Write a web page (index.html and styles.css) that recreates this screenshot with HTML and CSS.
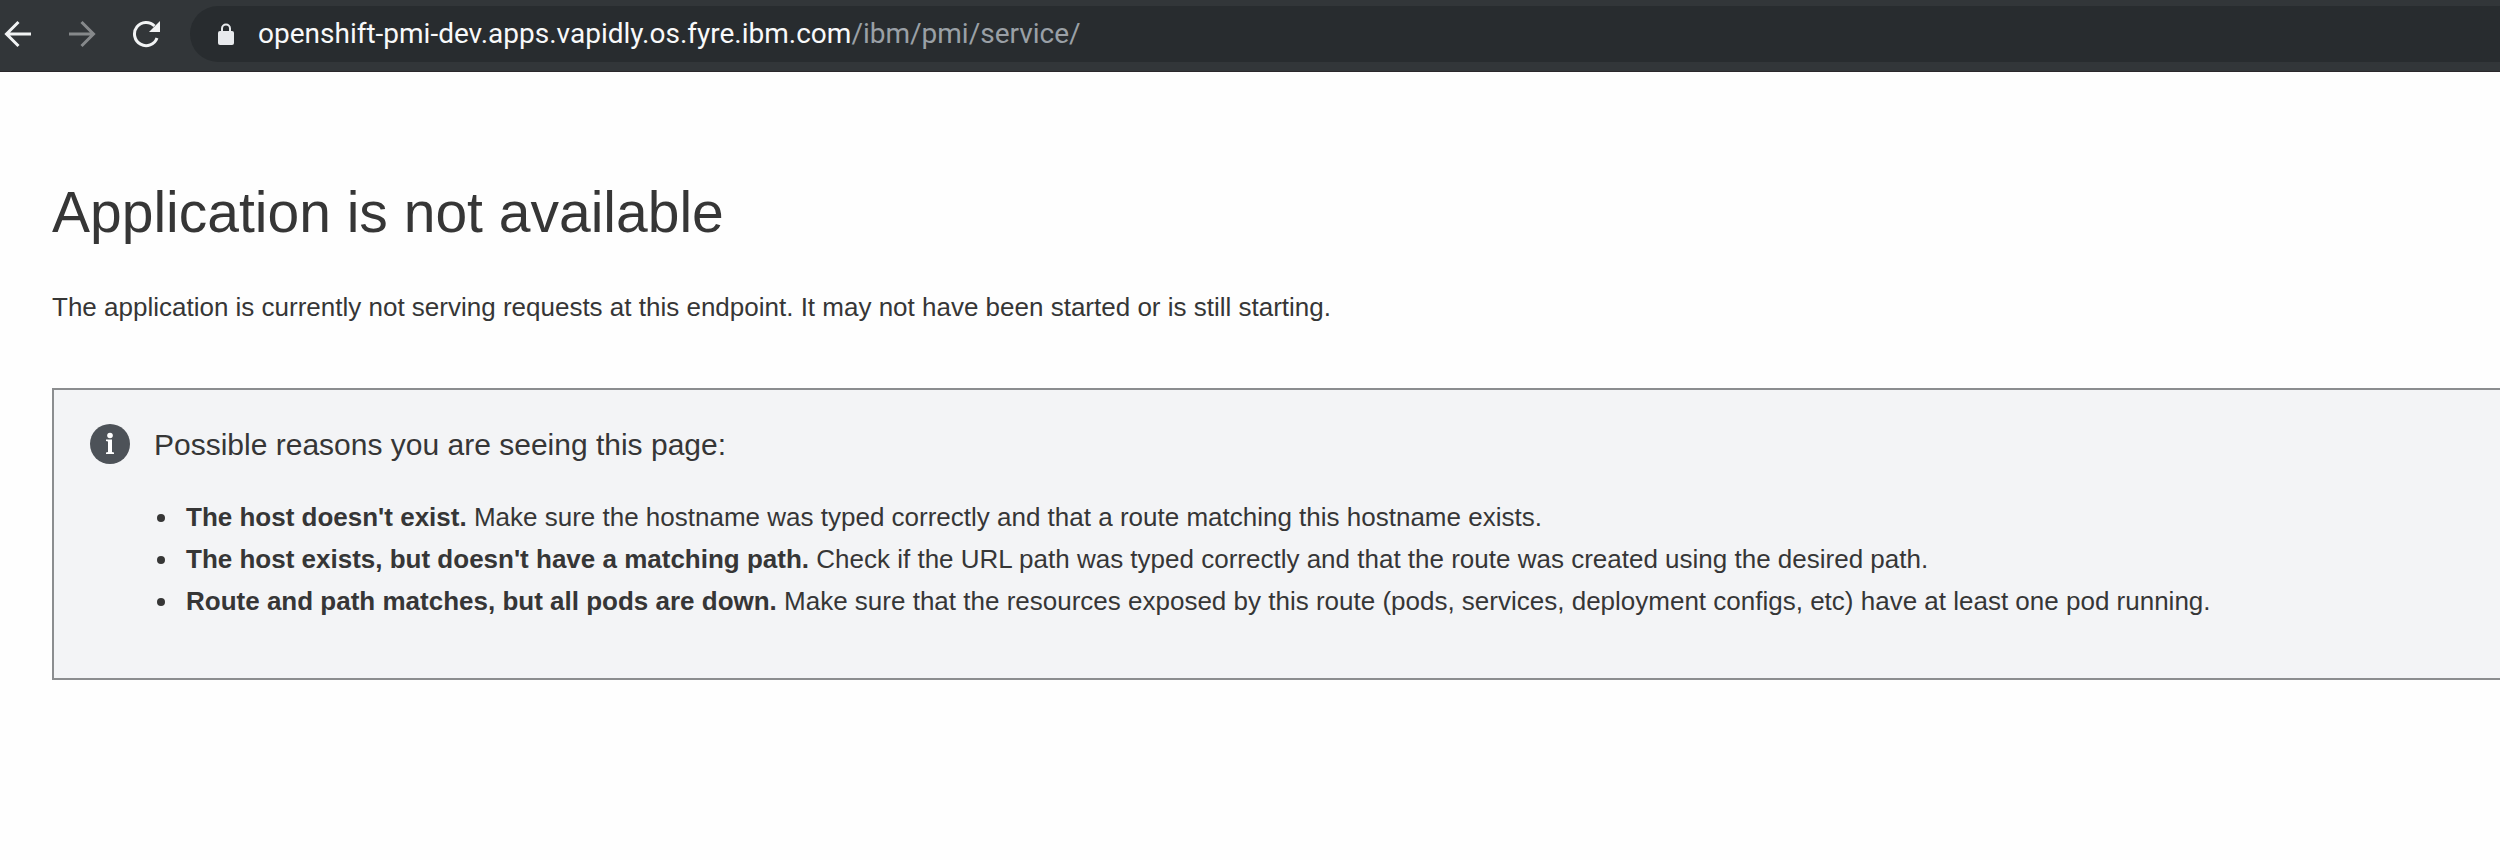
FILE: index.html
```html
<!DOCTYPE html>
<html lang="en">
<head>
  <meta charset="UTF-8">
  <meta name="viewport" content="width=device-width, initial-scale=1.0">
  <title>Application is not available</title>
  <link rel="stylesheet" href="styles.css">
</head>
<body>
  <header class="toolbar">
    <nav class="nav-buttons">
      <button type="button" class="nav-button" aria-label="Back">
        <svg class="icon" viewBox="0 0 28 28" fill="none" stroke="currentColor" stroke-width="3">
          <path d="M27 14H3M14.5 2L2.5 14L14.5 26"/>
        </svg>
      </button>
      <button type="button" class="nav-button" aria-label="Forward" disabled>
        <svg class="icon" viewBox="0 0 28 28" fill="none" stroke="currentColor" stroke-width="3">
          <path d="M1 14H25M13.5 2L25.5 14L13.5 26"/>
        </svg>
      </button>
      <button type="button" class="nav-button" aria-label="Reload">
        <svg class="icon" viewBox="0 0 28 28" fill="none" stroke="currentColor" stroke-width="3">
          <path d="M25 18A11.6 11.6 0 1 1 22.5 6"/>
          <path d="M28 1V12H17Z" fill="currentColor" stroke="none"/>
        </svg>
      </button>
    </nav>
    <div class="address-bar">
      <svg class="lock" viewBox="0 0 16 22">
        <path d="M4 9V5.5a4 4 0 0 1 8 0V9" fill="none" stroke="currentColor" stroke-width="2"/>
        <rect y="8" width="16" height="14" rx="2" fill="currentColor"/>
      </svg>
      <div class="url"><span class="host">openshift-pmi-dev.apps.vapidly.os.fyre.ibm.com</span>/ibm/pmi/service/</div>
    </div>
  </header>

  <main class="content">
    <h1>Application is not available</h1>
    <p>The application is currently not serving requests at this endpoint. It may not have been started or is still starting.</p>

    <div class="alert">
      <svg class="info-icon" viewBox="0 0 40 40">
        <circle cx="20" cy="20" r="20" fill="#4d5258"/>
        <circle cx="20" cy="11.5" r="2.8" fill="#fff"/>
        <path d="M16 15.5H22V28L24 28.5V30H16V28.5L18 28V17.5L16 17Z" fill="#fff"/>
      </svg>
      <div class="alert-body">
        <h2>Possible reasons you are seeing this page:</h2>
        <ul>
          <li><strong>The host doesn't exist.</strong> Make sure the hostname was typed correctly and that a route matching this hostname exists.</li>
          <li><strong>The host exists, but doesn't have a matching path.</strong> Check if the URL path was typed correctly and that the route was created using the desired path.</li>
          <li><strong>Route and path matches, but all pods are down.</strong> Make sure that the resources exposed by this route (pods, services, deployment configs, etc) have at least one pod running.</li>
        </ul>
      </div>
    </div>
  </main>
</body>
</html>
```
FILE: styles.css
```css
* {
  margin: 0;
  padding: 0;
  box-sizing: border-box;
}

body {
  font-family: "Liberation Sans", Helvetica, Arial, sans-serif;
  font-size: 26px;
  line-height: 42px;
  color: #363636;
  background: #fefefe;
  overflow-x: hidden;
}

.toolbar {
  display: flex;
  align-items: center;
  gap: 30px;
  height: 72px;
  padding: 0 0 3px 4px;
  background: #323639;
  border-bottom: 1px solid #2a272b;
}

.nav-buttons {
  display: flex;
  gap: 36px;
}

.nav-button {
  display: flex;
  border: none;
  background: none;
  color: #f1f3f4;
  cursor: pointer;
}

.nav-button:disabled {
  color: #86898b;
  cursor: default;
}

.icon {
  width: 28px;
  height: 28px;
}

.address-bar {
  flex: 1;
  display: flex;
  align-items: center;
  gap: 24px;
  height: 56px;
  padding-left: 28px;
  background: #282c2f;
  border-radius: 28px 0 0 28px;
}

.lock {
  width: 16px;
  height: 22px;
  color: #e8eaed;
}

.url {
  font-family: Roboto, "Liberation Sans", sans-serif;
  font-size: 28px;
  color: #9aa0a6;
}

.host {
  color: #f8f9fa;
}

.content {
  padding: 108px 0 52px 52px;
}

h1 {
  font-size: 57px;
  font-weight: normal;
  line-height: 64px;
  margin-bottom: 42px;
}

p {
  margin-bottom: 60px;
}

.alert {
  display: flex;
  gap: 24px;
  padding: 34px 36px 56px;
  background: #f3f4f6;
  border: 2px solid #8b8d8f;
  border-right: none;
}

.info-icon {
  flex: none;
  width: 40px;
  height: 40px;
}

h2 {
  font-size: 30px;
  font-weight: normal;
  margin-bottom: 30px;
}

ul {
  padding-left: 26px;
}

li {
  padding-left: 6px;
}
```
